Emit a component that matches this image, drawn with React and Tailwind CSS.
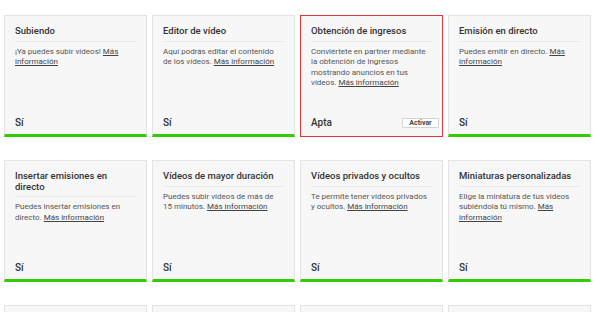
import React from 'react';

const features = [
  { title: 'Subiendo', text: '¡Ya puedes subir vídeos!', status: 'Sí' },
  { title: 'Editor de vídeo', text: 'Aquí podrás editar el contenido de los vídeos.', status: 'Sí' },
  {
    title: 'Obtención de ingresos',
    text: 'Conviértete en partner mediante la obtención de ingresos mostrando anuncios en tus vídeos.',
    status: 'Apta',
    action: 'Activar'
  },
  { title: 'Emisión en directo', text: 'Puedes emitir en directo.', status: 'Sí' },
  { title: 'Insertar emisiones en directo', text: 'Puedes insertar emisiones en directo.', status: 'Sí' },
  { title: 'Vídeos de mayor duración', text: 'Puedes subir vídeos de más de 15 minutos.', status: 'Sí' },
  { title: 'Vídeos privados y ocultos', text: 'Te permite tener vídeos privados y ocultos.', status: 'Sí' },
  { title: 'Miniaturas personalizadas', text: 'Elige la miniatura de tus vídeos subiéndola tú mismo.', status: 'Sí' },
  { title: 'Anotaciones externas', text: 'Puedes enlazar a sitios web externos.', status: 'Sí' },
  { title: 'Content ID', text: 'Gestiona tus derechos de autor.', status: 'Sí' },
  { title: 'Contenido de pago', text: 'Puedes ofrecer contenido de pago.', status: 'Sí' },
  { title: 'Financiación de fans', text: 'Tus fans pueden apoyarte.', status: 'Sí' }
];

function FeatureCard({ feature }) {
  const pending = !!feature.action;
  return (
    <div
      className={`flex flex-col h-[122px] bg-[#f7f7f7] border ${
        pending
          ? 'border-[#e2333b]'
          : 'border-[#e4e4e4] border-b-[3px] border-b-[#33cc00]'
      }`}
    >
      <div className="px-[10px] pt-[10px]">
        <h3 className="text-[9.5px] leading-[10.7px] font-medium text-[#333] pb-[4px] border-b border-[#e9e9e9]">
          {feature.title}
        </h3>
        <p className="mt-[5px] text-[8px] leading-[10.6px] text-[#555]">
          {feature.text}{' '}
          <a href="#" className="underline text-[#444]">
            Más información
          </a>
        </p>
      </div>
      <div
        className={`mt-auto flex items-center justify-between pl-[10px] pr-[3px] ${
          pending ? 'pb-[7px]' : 'pb-[5px]'
        }`}
      >
        <span className="text-[10px] leading-[12px] font-medium text-[#333]">{feature.status}</span>
        {pending && (
          <button className="h-[10px] w-[37px] flex items-center justify-center bg-white border border-[#d3d3d3] rounded-[1px] text-[7px] font-bold text-[#444]">
            {feature.action}
          </button>
        )}
      </div>
    </div>
  );
}

export default function App() {
  return (
    <div className="bg-white min-h-screen font-['Roboto',sans-serif]">
      <div className="grid grid-cols-[repeat(4,143px)] gap-x-[5px] gap-y-[23px] pl-[4px] pt-[15px]">
        {features.map((f) => (
          <FeatureCard key={f.title} feature={f} />
        ))}
      </div>
    </div>
  );
}
